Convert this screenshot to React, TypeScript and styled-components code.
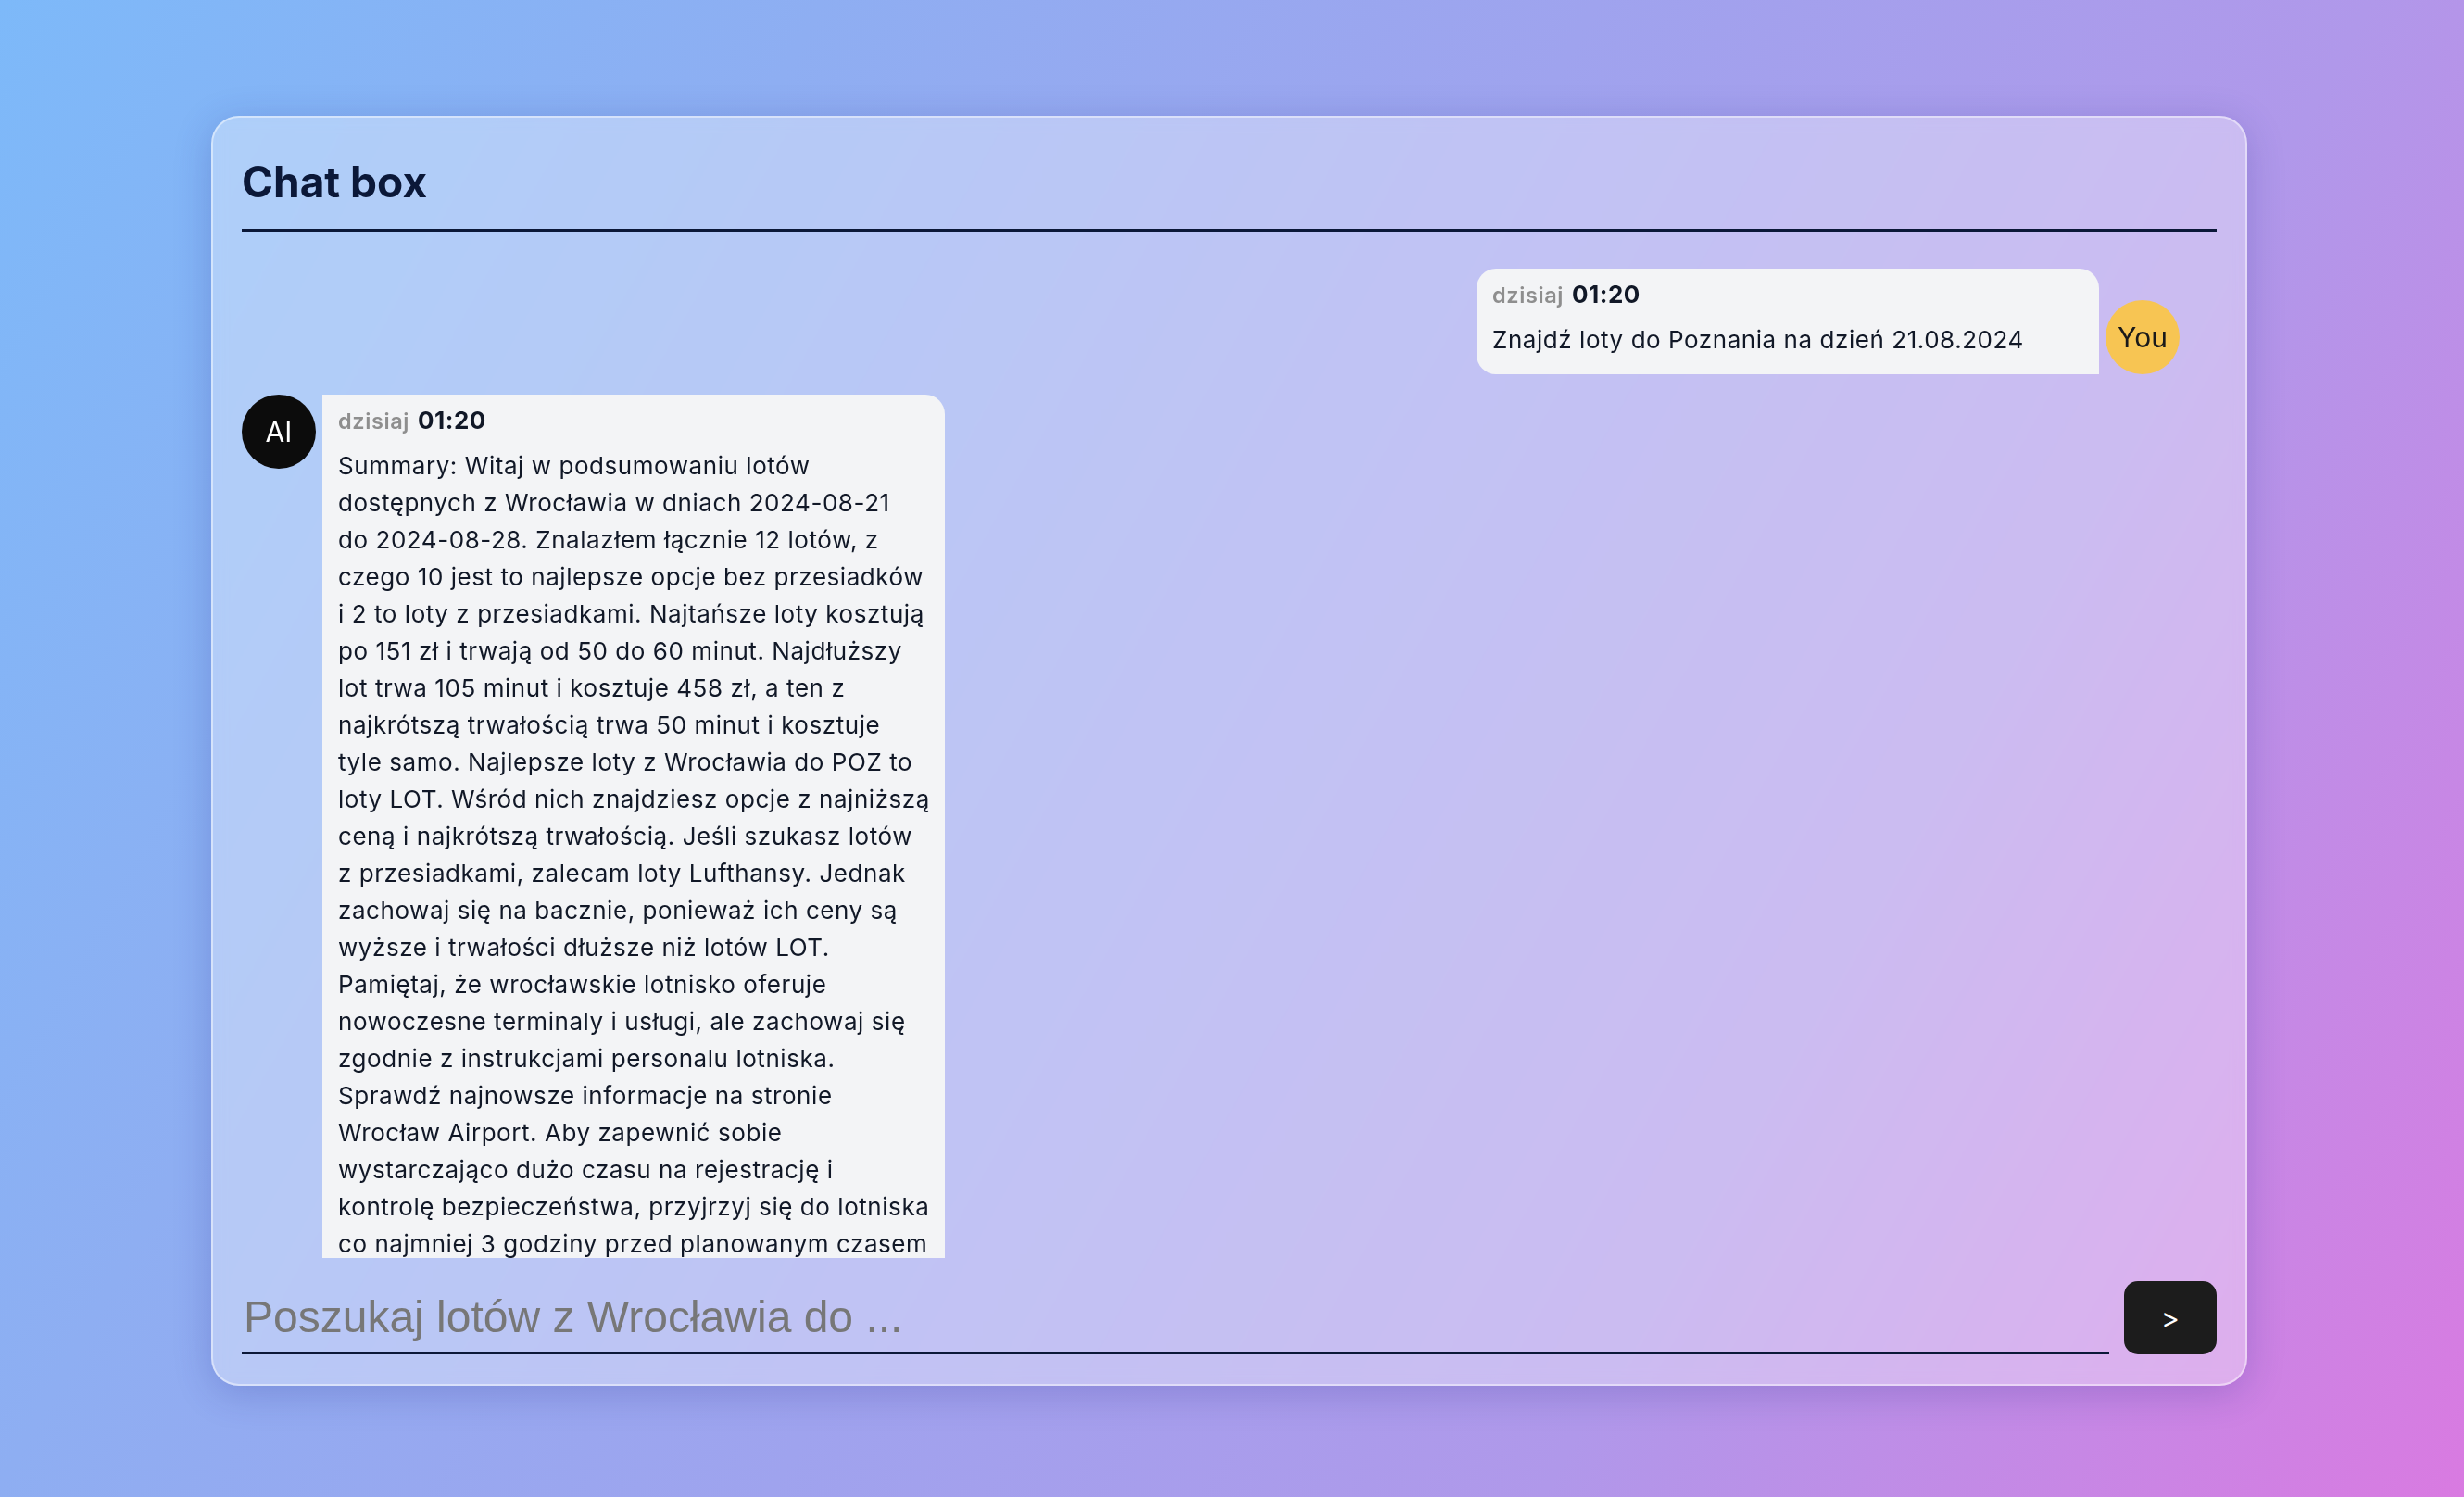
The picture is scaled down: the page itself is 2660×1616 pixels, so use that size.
import styled, { createGlobalStyle } from 'styled-components';

type Message = {
  id: number;
  author: 'user' | 'ai';
  day: string;
  time: string;
  lines: string[];
};

const messages: Message[] = [
  {
    id: 1,
    author: 'user',
    day: 'dzisiaj',
    time: '01:20',
    lines: ['Znajdź loty do Poznania na dzień 21.08.2024'],
  },
  {
    id: 2,
    author: 'ai',
    day: 'dzisiaj',
    time: '01:20',
    // the reply is broken into lines the same way the chat widget showed it
    lines: [
      'Summary: Witaj w podsumowaniu lotów',
      'dostępnych z Wrocławia w dniach 2024-08-21',
      'do 2024-08-28. Znalazłem łącznie 12 lotów, z',
      'czego 10 jest to najlepsze opcje bez przesiadków',
      'i 2 to loty z przesiadkami. Najtańsze loty kosztują',
      'po 151 zł i trwają od 50 do 60 minut. Najdłuższy',
      'lot trwa 105 minut i kosztuje 458 zł, a ten z',
      'najkrótszą trwałością trwa 50 minut i kosztuje',
      'tyle samo. Najlepsze loty z Wrocławia do POZ to',
      'loty LOT. Wśród nich znajdziesz opcje z najniższą',
      'ceną i najkrótszą trwałością. Jeśli szukasz lotów',
      'z przesiadkami, zalecam loty Lufthansy. Jednak',
      'zachowaj się na bacznie, ponieważ ich ceny są',
      'wyższe i trwałości dłuższe niż lotów LOT.',
      'Pamiętaj, że wrocławskie lotnisko oferuje',
      'nowoczesne terminaly i usługi, ale zachowaj się',
      'zgodnie z instrukcjami personalu lotniska.',
      'Sprawdź najnowsze informacje na stronie',
      'Wrocław Airport. Aby zapewnić sobie',
      'wystarczająco dużo czasu na rejestrację i',
      'kontrolę bezpieczeństwa, przyjrzyj się do lotniska',
      'co najmniej 3 godziny przed planowanym czasem',
      'odlotu. Życzę udanej podróży!',
    ],
  },
];

const MessageBody = ({ m }: { m: Message }) => (
  <Bubble $mine={m.author === 'user'}>
    <Meta>
      <Day>{m.day}</Day>
      <Time>{m.time}</Time>
    </Meta>
    <Text>
      {m.lines.map((line, i) => (
        <Line key={i}>{line}</Line>
      ))}
    </Text>
  </Bubble>
);

const App = () => {
  return (
    <Page>
      <GlobalStyle />
      <Card>
        <Title>Chat box</Title>
        <MessageList>
          {messages.map((m) =>
            m.author === 'user' ? (
              <Row key={m.id} $mine>
                <MessageBody m={m} />
                <Avatar $variant="user">You</Avatar>
              </Row>
            ) : (
              <Row key={m.id}>
                <Avatar $variant="ai">AI</Avatar>
                <MessageBody m={m} />
              </Row>
            )
          )}
        </MessageList>
        <InputRow>
          <SearchInput placeholder="Poszukaj lotów z Wrocławia do ..." />
          <SendButton type="button">&gt;</SendButton>
        </InputRow>
      </Card>
    </Page>
  );
};

export default App;

const GlobalStyle = createGlobalStyle`
  html, body {
    margin: 0;
    padding: 0;
  }
  body {
    font-family: Inter, "Noto Sans", sans-serif;
  }
  * {
    box-sizing: border-box;
  }
`;

const Page = styled.div`
  min-height: 100vh;
  display: flex;
  padding: 125px 234px 120px 228px;
  background: linear-gradient(119deg, #7db9f9 0%, #8eaef2 25%, #b098ea 72%, #d97ae1 100%);
`;

const Card = styled.div`
  flex: 1;
  height: 1371px;
  display: flex;
  flex-direction: column;
  padding: 31px 31px 32px;
  border-radius: 30px;
  border: 2px solid rgba(255, 255, 255, 0.45);
  background: rgba(255, 255, 255, 0.35);
  box-shadow: 0 8px 40px rgba(31, 38, 135, 0.22);
  backdrop-filter: blur(8px);
`;

const Title = styled.h1`
  margin: 0;
  padding: 9px 0 22px;
  font-size: 46px;
  line-height: 58px;
  font-weight: 700;
  color: #0b1838;
  border-bottom: 3px solid #0b1838;
`;

const MessageList = styled.div`
  flex: 1;
  min-height: 0;
  overflow-y: auto;
  scrollbar-width: none;
  padding: 40px 40px 0 0;
  display: flex;
  flex-direction: column;
  gap: 22px;
`;

const Row = styled.div<{ $mine?: boolean }>`
  display: flex;
  gap: 7px;
  justify-content: ${(p) => (p.$mine ? 'flex-end' : 'flex-start')};
  align-items: ${(p) => (p.$mine ? 'flex-end' : 'flex-start')};
  flex-shrink: 0;
`;

const Bubble = styled.div<{ $mine?: boolean }>`
  width: 672px;
  padding: 10px 17px 17px;
  background: #f3f4f6;
  color: #111827;
  border-radius: ${(p) => (p.$mine ? '21px 21px 0 21px' : '0 21px 21px 21px')};
`;

const Meta = styled.div`
  display: flex;
  align-items: baseline;
  gap: 9px;
  height: 36px;
  line-height: 36px;
  margin-bottom: 11px;
`;

const Day = styled.span`
  font-size: 23.5px;
  font-weight: 600;
  letter-spacing: 0.6px;
  color: #8e8e8e;
`;

const Time = styled.span`
  font-size: 26px;
  font-weight: 700;
  letter-spacing: 0.5px;
  color: #111827;
`;

const Text = styled.p`
  margin: 0;
  font-size: 26px;
  letter-spacing: 0.55px;
  line-height: 40px;
`;

const Line = styled.span`
  display: block;
  white-space: pre;
`;

const Avatar = styled.div<{ $variant: 'user' | 'ai' }>`
  width: 80px;
  height: 80px;
  flex-shrink: 0;
  border-radius: 50%;
  display: flex;
  align-items: center;
  justify-content: center;
  font-size: 30px;
  background: ${(p) => (p.$variant === 'user' ? '#f7c553' : '#0c0c0c')};
  color: ${(p) => (p.$variant === 'user' ? '#1a1a1a' : '#ffffff')};
`;

const InputRow = styled.div`
  display: flex;
  gap: 16px;
  margin-top: 25px;
  height: 79px;
`;

const SearchInput = styled.input`
  flex: 1;
  height: 79px;
  padding: 0 2px;
  border: none;
  border-bottom: 3px solid #0b1838;
  background: transparent;
  outline: none;
  font-family: "Liberation Sans", Arial, sans-serif;
  font-size: 48px;
  color: #222;

  &::placeholder {
    color: #777777;
  }
`;

const SendButton = styled.button`
  width: 100px;
  height: 79px;
  border: none;
  border-radius: 15px;
  background: #1c1c1c;
  color: #ffffff;
  font-family: Inter, sans-serif;
  font-size: 30px;
  cursor: pointer;
`;
